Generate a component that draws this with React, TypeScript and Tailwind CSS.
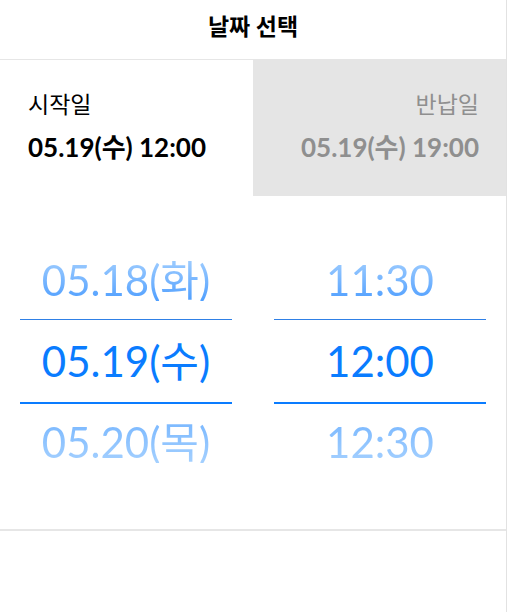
import React from 'react';

const dates = [
  { label: '05.18(화)', tone: 'prev' },
  { label: '05.19(수)', tone: 'current' },
  { label: '05.20(목)', tone: 'next' },
];

const times = [
  { label: '11:30', tone: 'prev' },
  { label: '12:00', tone: 'current' },
  { label: '12:30', tone: 'next' },
];

type Item = { label: string; tone: string };

function WheelColumn({ items }: { items: Item[] }) {
  return (
    <div className="flex w-[212px] flex-col">
      <div className="flex h-[78px] items-center justify-center">
        <span className="bg-gradient-to-b from-[#9fcdff] to-[#4f9fff] bg-clip-text text-transparent">
          {items[0].label}
        </span>
      </div>
      <div className="flex h-[85px] items-center justify-center border-t border-b-2 border-t-[#2f80e6] border-b-[#0a7cff] text-[#0a7cff]">
        {items[1].label}
      </div>
      <div className="flex h-[76px] items-center justify-center">
        <span className="bg-gradient-to-b from-[#7ab8ff] to-[#a4d0ff] bg-clip-text text-transparent">
          {items[2].label}
        </span>
      </div>
    </div>
  );
}

export default function App() {
  return (
    <div className="h-[612px] w-[507px] border-r border-[#e2e2e2] bg-white font-['Lato','Noto_Sans_CJK_KR',sans-serif]">
      <div className="flex h-[60px] items-center justify-center border-b border-[#e6e6e6] pb-[6px] text-[23px] font-bold text-black">
        날짜 선택
      </div>

      <div className="grid h-[136px] grid-cols-2">
        <div className="flex flex-col pl-[28px] pt-[29px]">
          <span className="text-[23px] leading-[30px] text-black">시작일</span>
          <span className="mt-[13px] text-[26px] font-bold leading-[30px] text-black">05.19(수) 12:00</span>
        </div>
        <div className="-mt-px flex flex-col items-end bg-[#e5e5e5] pr-[27px] pt-[30px]">
          <span className="text-[23px] leading-[30px] text-[#8f8f8f]">반납일</span>
          <span className="mt-[13px] text-[26px] font-bold leading-[30px] text-[#8f8f8f]">05.19(수) 19:00</span>
        </div>
      </div>

      <div className="flex gap-[42px] border-b-2 border-[#e6e6e6] px-[20px] pb-[49px] pt-[45px] text-[42px] leading-none">
        <WheelColumn items={dates} />
        <WheelColumn items={times} />
      </div>
    </div>
  );
}
